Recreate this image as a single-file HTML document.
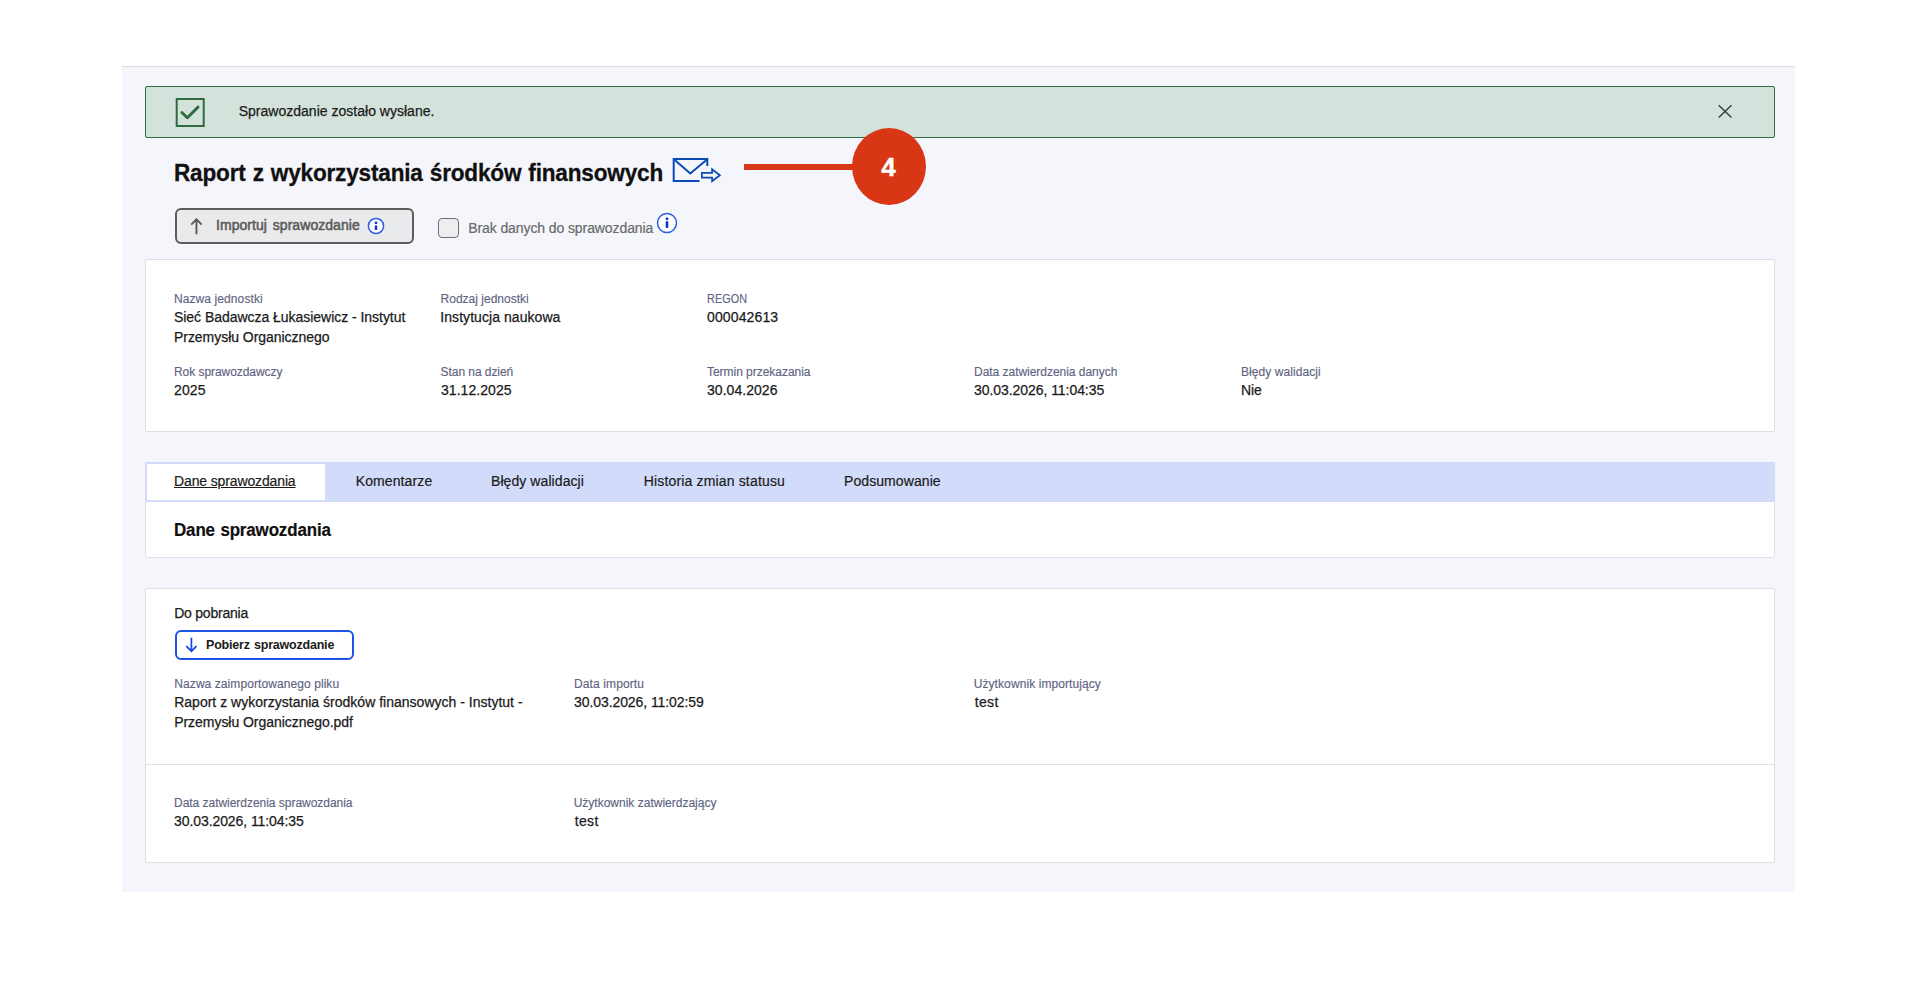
<!DOCTYPE html>
<html lang="pl">
<head>
<meta charset="utf-8">
<title>Raport z wykorzystania środków finansowych</title>
<style>
  html, body { margin: 0; padding: 0; background: #ffffff; }
  body { width: 1914px; height: 996px; position: relative; overflow: hidden;
         font-family: "Liberation Sans", sans-serif; color: #1b1b1b; }
  .abs { position: absolute; white-space: nowrap; }
  .panel { position: absolute; left: 122px; top: 66px; width: 1673px; height: 826px;
           background: #f4f6fb; border-top: 1px solid #dcdde3; box-sizing: border-box; }
  .alert { position: absolute; left: 145px; top: 86px; width: 1630px; height: 52px; border-radius: 2px;
           box-sizing: border-box; background: #d3e3db; border: 1px solid #2f6b3f; }
  .card { position: absolute; left: 145px; width: 1630px; box-sizing: border-box;
          background: #ffffff; border: 1px solid #dfe0e6; border-radius: 2px; }
  .lbl { font-size: 12px; line-height: 14px; color: #5f6482; -webkit-text-stroke: 0.15px #5f6482; }
  .val { font-size: 14px; line-height: 20px; color: #1b1b1b; -webkit-text-stroke: 0.25px #1b1b1b; }
  .tab { font-size: 14px; line-height: 20px; color: #1b1b1b; -webkit-text-stroke: 0.2px #1b1b1b; }
  main, section, nav, header, aside, dl { display: block; margin: 0; padding: 0; }
  dt, dd, h1, h2, p { margin: 0; }
  button.abs { padding: 0; font: inherit; color: inherit; cursor: pointer; }
  a.tab { color: #1b1b1b; text-decoration: none; }
  a.tab.active { text-decoration: underline; }
</style>
</head>
<body>
<main>
<div class="panel"></div>

<section role="alert">
<!-- alert -->
<div class="alert"></div>
<svg class="abs" style="left:175px;top:97px" width="31" height="31" viewBox="0 0 31 31">
  <rect x="1.7" y="2" width="27" height="27" fill="none" stroke="#2f6b3f" stroke-width="2"/>
  <path d="M6.9 15.5 L12.3 20.7 L23 10.1" fill="none" stroke="#2f6b3f" stroke-width="2.9" stroke-linecap="round" stroke-linejoin="round"/>
</svg>
<p class="abs" id="t_alert" style="-webkit-text-stroke:0.25px #1b1b1b;left:238.7px;top:101px;font-size:14px;line-height:20px;letter-spacing:0.014px">Sprawozdanie zostało wysłane.</p>
<svg class="abs" style="left:1717px;top:103px" width="16" height="16" viewBox="0 0 16 16">
  <path d="M1.7 2.3 L14.5 14.5 M14.5 2.3 L1.7 14.5" stroke="#383b3a" stroke-width="1.4" fill="none"/>
</svg>
</section>

<header>
<!-- title -->
<h1 class="abs" id="t_title" style="word-spacing:1px;left:174.0px;top:157px;margin:0;font-size:24px;line-height:32px;font-weight:bold;color:#101010;transform:scaleX(0.94);transform-origin:0 0;-webkit-text-stroke:0.3px #101010;letter-spacing:-0.188px">Raport z wykorzystania środków finansowych</h1>
<svg class="abs" style="left:670px;top:154px" width="56" height="32" viewBox="0 0 56 32">
  <path d="M37.3 12 V5 H3.7 V27 H29.5" fill="none" stroke="#0b4ab5" stroke-width="2"/>
  <path d="M4.7 6 L20.3 19.5 L36.4 6" fill="none" stroke="#0b4ab5" stroke-width="2"/>
  <path d="M31.9 18.8 H42.1 V15.3 L49.9 21.25 L42.1 27.2 V23.7 H31.9 Z" fill="none" stroke="#0b4ab5" stroke-width="1.7"/>
</svg>
</header>

<aside aria-label="Oznaczenie">
<!-- red annotation -->
<div class="abs" style="left:744px;top:164px;width:120px;height:5.6px;background:#d93616"></div>
<div class="abs" style="left:852.2px;top:128.1px;width:74px;height:76.8px;border-radius:50%;background:#d93616"></div>
<span class="abs" id="t_four" style="left:851.5px;top:152px;width:74px;text-align:center;font-size:26px;line-height:30px;font-weight:bold;color:#fff;-webkit-text-stroke:0.4px #fff">4</span>
</aside>

<div class="toolbar">
<!-- import button -->
<button type="button" class="abs" aria-label="Importuj sprawozdanie" style="left:175px;top:208px;width:238.5px;height:35.5px;box-sizing:border-box;border:2px solid #5c5c5c;border-radius:6px;background:#e9eaeb"></button>
<svg class="abs" style="left:188px;top:217px" width="18" height="18" viewBox="0 0 18 18">
  <path d="M8.45 17.2 V2.2 M3.2 7.7 L8.45 2.4 L13.7 7.7" fill="none" stroke="#5a5a5a" stroke-width="1.9"/>
</svg>
<span class="abs" id="t_import" style="word-spacing:1.8px;left:216.0px;top:215px;font-size:14px;line-height:20px;color:#5c5c5c;-webkit-text-stroke:0.55px #5c5c5c;letter-spacing:0.055px">Importuj sprawozdanie</span>
<svg class="abs" style="left:366.7px;top:216.9px" width="18" height="18" viewBox="0 0 18 18">
  <circle cx="9" cy="9" r="7.6" fill="#fff" stroke="#2c5fe2" stroke-width="1.5"/>
  <circle cx="9" cy="5.8" r="1.4" fill="#0c2fd0"/>
  <rect x="7.8" y="8.4" width="2.4" height="4.6" fill="#0c2fd0"/>
</svg>
</div>

<div class="field-check">
<!-- checkbox -->
<div class="abs" style="left:438.4px;top:218px;width:20.6px;height:20px;box-sizing:border-box;border:1.5px solid #707070;border-radius:4px;background:#eeeeef"></div>
<label class="abs" id="t_brak" style="-webkit-text-stroke:0.2px #6a6a6a;left:468.2px;top:218px;font-size:14px;line-height:20px;color:#6a6a6a;letter-spacing:-0.093px">Brak danych do sprawozdania</label>
<svg class="abs" style="left:656.3px;top:211.95px" width="22" height="22" viewBox="0 0 22 22">
  <circle cx="11" cy="11" r="9.5" fill="#fff" stroke="#2c5fe2" stroke-width="1.5"/>
  <circle cx="11" cy="6.8" r="1.4" fill="#0c2fd0"/>
  <rect x="9.75" y="9.25" width="2.5" height="6.6" fill="#0c2fd0"/>
</svg>
</div>

<section aria-label="Informacje o sprawozdaniu">
<!-- info card -->
<div class="card" style="top:259px;height:173px"></div>
<dl>
<dt class="abs lbl" id="l1" style="left:174.0px;top:292px;letter-spacing:0.092px">Nazwa jednostki</dt>
<dd class="abs val" id="v1a" style="left:174.0px;top:307px;letter-spacing:-0.037px">Sieć Badawcza Łukasiewicz - Instytut</dd>
<dd class="abs val" id="v1b" style="left:174.0px;top:327px;letter-spacing:-0.045px">Przemysłu Organicznego</dd>
<dt class="abs lbl" id="l2" style="left:440.6px;top:292px;letter-spacing:0.004px">Rodzaj jednostki</dt>
<dd class="abs val" id="v2" style="left:440.3px;top:307px;letter-spacing:0.061px">Instytucja naukowa</dd>
<dt class="abs lbl" id="l3" style="left:707.0px;top:292px;transform:scaleX(0.9);transform-origin:0 0;letter-spacing:0.100px">REGON</dt>
<dd class="abs val" id="v3" style="left:707.0px;top:307px;letter-spacing:0.126px">000042613</dd>

<dt class="abs lbl" id="l4" style="left:174.0px;top:365px;letter-spacing:-0.056px">Rok sprawozdawczy</dt>
<dd class="abs val" id="v4" style="left:174.0px;top:380px;letter-spacing:0.128px">2025</dd>
<dt class="abs lbl" id="l5" style="left:440.6px;top:365px;letter-spacing:-0.064px">Stan na dzień</dt>
<dd class="abs val" id="v5" style="left:441.0px;top:380px;letter-spacing:0.049px">31.12.2025</dd>
<dt class="abs lbl" id="l6" style="left:707.0px;top:365px;letter-spacing:-0.032px">Termin przekazania</dt>
<dd class="abs val" id="v6" style="left:707.0px;top:380px;letter-spacing:0.041px">30.04.2026</dd>
<dt class="abs lbl" id="l7" style="left:974.0px;top:365px;letter-spacing:-0.032px">Data zatwierdzenia danych</dt>
<dd class="abs val" id="v7" style="left:974.0px;top:380px;letter-spacing:-0.057px">30.03.2026, 11:04:35</dd>
<dt class="abs lbl" id="l8" style="left:1241.0px;top:365px;letter-spacing:0.065px">Błędy walidacji</dt>
<dd class="abs val" id="v8" style="left:1241.0px;top:380px;letter-spacing:-0.153px">Nie</dd>
</dl>
</section>

<section aria-label="Zakładki">
<!-- tabs -->
<div class="card" style="top:461.5px;height:96px"></div>
<div class="abs" style="left:145px;top:462px;width:1630px;height:40px;background:#d3dbfa"></div>
<div class="abs" style="left:147px;top:463.5px;width:178px;height:36px;background:#fff"></div>
<a class="abs tab active" id="tab1" style="left:174.0px;top:471px;letter-spacing:-0.131px">Dane sprawozdania</a>
<a class="abs tab" id="tab2" style="left:355.7px;top:471px;letter-spacing:0.113px">Komentarze</a>
<a class="abs tab" id="tab3" style="left:491.0px;top:471px;letter-spacing:0.077px">Błędy walidacji</a>
<a class="abs tab" id="tab4" style="left:643.7px;top:471px;letter-spacing:0.163px">Historia zmian statusu</a>
<a class="abs tab" id="tab5" style="left:844.0px;top:471px;letter-spacing:0.085px">Podsumowanie</a>
<h2 class="abs" id="t_h2" style="word-spacing:1px;left:174.0px;top:518px;margin:0;font-size:18px;line-height:24px;font-weight:bold;color:#101010;transform:scaleX(0.94);transform-origin:0 0;-webkit-text-stroke:0.2px #101010;letter-spacing:-0.135px">Dane sprawozdania</h2>
</section>

<section aria-label="Do pobrania">
<!-- download card -->
<div class="card" style="top:588px;height:275px"></div>
<div class="abs" style="left:146px;top:764px;width:1628px;height:1px;background:#dfe0e6"></div>
<div class="abs val" id="t_dopob" style="left:174.2px;top:603px;letter-spacing:-0.225px">Do pobrania</div>
<button type="button" class="abs" aria-label="Pobierz sprawozdanie" style="left:174.6px;top:630.3px;width:179.8px;height:30.1px;box-sizing:border-box;border:2px solid #1c54e4;border-radius:6px;background:#fff"></button>
<svg class="abs" style="left:183px;top:637px" width="16" height="16" viewBox="0 0 16 16">
  <path d="M8.4 0.7 V14.2 M3.3 9.1 L8.4 14.2 L13.5 9.1" fill="none" stroke="#1844e0" stroke-width="1.7"/>
</svg>
<span class="abs" id="t_pobierz" style="word-spacing:1px;left:206.0px;top:635px;font-size:12.5px;line-height:20px;font-weight:bold;color:#1b1b1b;letter-spacing:-0.208px">Pobierz sprawozdanie</span>

<dl>
<dt class="abs lbl" id="l9" style="left:174.3px;top:677px;letter-spacing:0.080px">Nazwa zaimportowanego pliku</dt>
<dd class="abs val" id="v9a" style="left:174.2px;top:692px;letter-spacing:0.011px">Raport z wykorzystania środków finansowych - Instytut -</dd>
<dd class="abs val" id="v9b" style="left:174.2px;top:712px;letter-spacing:-0.040px">Przemysłu Organicznego.pdf</dd>
<dt class="abs lbl" id="l10" style="left:574.0px;top:677px;letter-spacing:0.114px">Data importu</dt>
<dd class="abs val" id="v10" style="left:574.0px;top:692px;letter-spacing:-0.079px">30.03.2026, 11:02:59</dd>
<dt class="abs lbl" id="l11" style="left:973.7px;top:677px;letter-spacing:0.086px">Użytkownik importujący</dt>
<dd class="abs val" id="v11" style="left:974.7px;top:692px;letter-spacing:0.362px">test</dd>

<dt class="abs lbl" id="l12" style="left:174.0px;top:796px;letter-spacing:-0.030px">Data zatwierdzenia sprawozdania</dt>
<dd class="abs val" id="v12" style="left:174.0px;top:811px;letter-spacing:-0.079px">30.03.2026, 11:04:35</dd>
<dt class="abs lbl" id="l13" style="left:573.7px;top:796px;letter-spacing:0.000px">Użytkownik zatwierdzający</dt>
<dd class="abs val" id="v13" style="left:574.7px;top:811px;letter-spacing:0.362px">test</dd>
</dl>
</section>
</main>
</body>
</html>
